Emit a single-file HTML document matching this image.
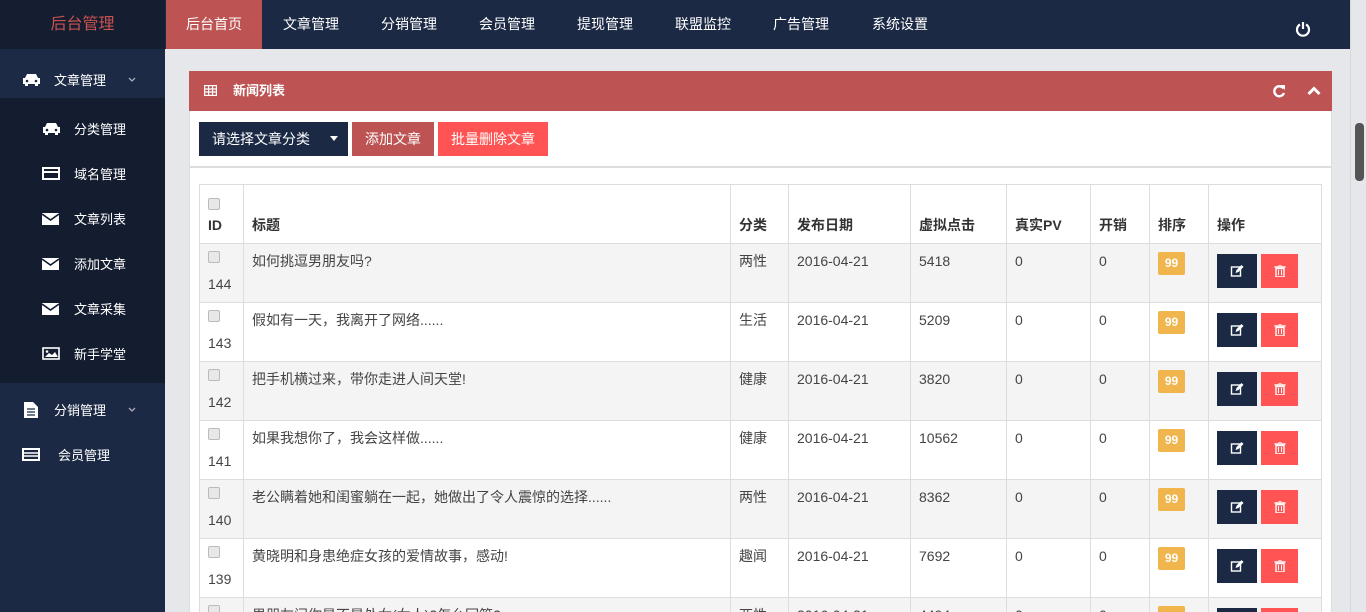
<!DOCTYPE html>
<html><head><meta charset="utf-8"><style>
*{margin:0;padding:0;box-sizing:border-box}
html,body{width:1366px;height:612px;overflow:hidden}
body{background:#e5e7ea;font-family:"Liberation Sans","Noto Sans CJK SC",sans-serif;font-size:14px;color:#333;position:relative}
#wrap{position:absolute;left:0;top:0;width:1366px;height:612px;overflow:hidden}
.abs{position:absolute}
.top{left:0;top:0;width:1350px;height:49px;background:#1b2945}
.logo{left:0;top:0;width:165px;height:49px;background:#151e31;color:#c9524f;font-size:16px;text-align:center;line-height:49px}
.nav{top:0;height:49px;line-height:49px;color:#fff;font-size:14px;text-align:center}
.side{left:0;top:49px;width:165px;height:563px;background:#1b2944}
.sub{left:0;top:98px;width:165px;height:285px;background:#141d30}
.si{color:#fff;font-size:13px;height:45px;line-height:45px}
.panel{left:189px;top:71px;width:1143px;height:541px;background:#fff;border:1px solid #ddd;border-bottom:0}
.ph{left:189px;top:71px;width:1143px;height:40px;background:#bd5352;color:#fff;font-weight:bold;font-size:13px;line-height:40px}
.btn{top:122px;height:34px;line-height:34px;color:#fff;font-size:14px;text-align:center}
#tw{position:absolute;left:199px;top:184px;width:1124px;height:428px;overflow:hidden}
table{border-collapse:collapse;font-size:14px}
td,th{border:1px solid #ddd;text-align:left;vertical-align:top;padding:7px 8px 0 8px;font-weight:normal;color:#444;line-height:20px}
th{font-weight:bold;vertical-align:bottom;padding-bottom:8px;height:59px;color:#333}
tr.r td{height:59px}
tr.g td{background:#f4f4f4}
.cb{display:inline-block;width:12px;height:12px;border:1px solid #bbb;border-radius:2px;background:#e8e8e8;margin-bottom:6px}
.b99{display:inline-block;background:#f0b54d;color:#fff;font-weight:bold;font-size:12px;width:27px;height:23px;line-height:23px;text-align:center;border-radius:2px;margin-top:1px}
.ed,.de{display:inline-block;width:40px;height:34px;vertical-align:top;margin-top:3px;position:relative}
.ed{background:#1b2945}.de{background:#ff5453;width:37px;margin-left:4px}
.ed svg,.de svg{position:absolute;left:50%;top:50%;transform:translate(-50%,-50%)}
.scr{left:1350px;top:0;width:16px;height:612px;background:#e5e7ea;border-left:1px solid #d5d7da}
</style></head><body><div id="wrap">
<div class="abs top"></div>
<div class="abs logo">后台管理</div>
<div class="abs nav" style="left:166px;width:96px;background:#bd5352">后台首页</div>
<div class="abs nav" style="left:262px;width:98px">文章管理</div>
<div class="abs nav" style="left:360px;width:98px">分销管理</div>
<div class="abs nav" style="left:458px;width:98px">会员管理</div>
<div class="abs nav" style="left:556px;width:98px">提现管理</div>
<div class="abs nav" style="left:654px;width:98px">联盟监控</div>
<div class="abs nav" style="left:752px;width:98px">广告管理</div>
<div class="abs nav" style="left:850px;width:100px">系统设置</div>
<svg class="abs" style="left:1295px;top:21px" width="16" height="16" viewBox="0 0 16 16"><path d="M5 3.5A6 6 0 1 0 11 3.5" fill="none" stroke="#fff" stroke-width="2.2"/><path d="M8 1v7" stroke="#fff" stroke-width="2.2"/></svg>
<div class="abs side"></div>
<div class="abs sub"></div>
<div class="abs" style="left:0;top:49px;width:165px;height:49px;background:#1c2a45"></div>
<div class="abs si" style="left:54px;top:58px">文章管理</div>
<svg class="abs" style="left:128px;top:77px" width="8" height="6"><path d="M1 1l3 3 3-3" fill="none" stroke="#aab" stroke-width="1.3"/></svg>
<svg class="abs" style="left:22px;top:73px" width="19" height="13"><path d="M3 5L5 1h9l2 4h2v6h-2v2h-3v-2H6v2H3v-2H1V5z" fill="#fff"/><circle cx="5" cy="8" r="1.3" fill="#1c2a45"/><circle cx="14" cy="8" r="1.3" fill="#1c2a45"/></svg>
<div class="abs si" style="left:74px;top:107px">分类管理</div>
<svg class="abs" style="left:42px;top:122px" width="19" height="13"><path d="M3 5L5 1h9l2 4h2v6h-2v2h-3v-2H6v2H3v-2H1V5z" fill="#fff"/><circle cx="5" cy="8" r="1.3" fill="#141d30"/><circle cx="14" cy="8" r="1.3" fill="#141d30"/></svg>
<div class="abs si" style="left:74px;top:152px">域名管理</div>
<svg class="abs" style="left:42px;top:167px" width="18" height="13"><rect x="1" y="1" width="16" height="11" fill="none" stroke="#fff" stroke-width="2"/><rect x="1" y="4" width="16" height="2" fill="#fff"/></svg>
<div class="abs si" style="left:74px;top:197px">文章列表</div>
<div class="abs si" style="left:74px;top:242px">添加文章</div>
<div class="abs si" style="left:74px;top:287px">文章采集</div>
<svg class="abs" style="left:42px;top:213px" width="17" height="12"><rect width="17" height="12" fill="#fff"/><path d="M0 1l8.5 6L17 1" stroke="#141d30" stroke-width="1.6" fill="none"/></svg>
<svg class="abs" style="left:42px;top:258px" width="17" height="12"><rect width="17" height="12" fill="#fff"/><path d="M0 1l8.5 6L17 1" stroke="#141d30" stroke-width="1.6" fill="none"/></svg>
<svg class="abs" style="left:42px;top:303px" width="17" height="12"><rect width="17" height="12" fill="#fff"/><path d="M0 1l8.5 6L17 1" stroke="#141d30" stroke-width="1.6" fill="none"/></svg>
<div class="abs si" style="left:74px;top:332px">新手学堂</div>
<svg class="abs" style="left:42px;top:347px" width="18" height="13"><rect x="1" y="1" width="16" height="11" fill="none" stroke="#fff" stroke-width="1.6"/><path d="M3 10l4-4 3 2 3-3 3 5z" fill="#fff"/><circle cx="5" cy="4.5" r="1.3" fill="#fff"/></svg>
<div class="abs si" style="left:54px;top:388px">分销管理</div>
<svg class="abs" style="left:128px;top:407px" width="8" height="6"><path d="M1 1l3 3 3-3" fill="none" stroke="#aab" stroke-width="1.3"/></svg>
<svg class="abs" style="left:24px;top:402px" width="14" height="16"><path d="M0 0h9l5 5v11H0z" fill="#fff"/><path d="M3 7h8M3 10h8M3 13h8" stroke="#1b2944" stroke-width="1.3"/></svg>
<div class="abs si" style="left:58px;top:433px">会员管理</div>
<svg class="abs" style="left:22px;top:448px" width="18" height="13"><rect x="1" y="1" width="16" height="11" fill="none" stroke="#fff" stroke-width="2"/><path d="M1 5h16M1 8h16" stroke="#fff" stroke-width="1.5"/></svg>

<div class="abs panel"></div>
<div class="abs ph"><span style="position:absolute;left:44px">新闻列表</span></div>
<svg class="abs" style="left:204px;top:85px" width="13" height="11"><g fill="none" stroke="#fff" stroke-width="1.2"><rect x=".6" y=".6" width="11.8" height="9.8"/><path d="M.6 4h11.8M.6 7h11.8M4.6.6v9.8M8.6.6v9.8"/></g></svg>
<svg class="abs" style="left:1272px;top:84px" width="14" height="14"><path d="M11.5 4.5A5 5 0 1 0 12 9" fill="none" stroke="#fff" stroke-width="2.4"/><path d="M8 1h5v5z" fill="#fff"/></svg>
<svg class="abs" style="left:1307px;top:86px" width="14" height="10"><path d="M1.5 8L7 2.5 12.5 8" fill="none" stroke="#fff" stroke-width="3"/></svg>
<div class="abs" style="left:189px;top:166px;width:1143px;height:2px;background:#ddd"></div>
<div class="abs btn" style="left:199px;width:149px;background:#1b2945;text-align:left;padding-left:13px">请选择文章分类<span style="position:absolute;left:131px;top:14px;border:4px solid transparent;border-top:5px solid #fff;border-bottom:0"></span></div>
<div class="abs btn" style="left:352px;width:82px;background:#bd5352">添加文章</div>
<div class="abs btn" style="left:438px;width:110px;background:#ff5453">批量删除文章</div>

<div id="tw"><table>
<colgroup><col style="width:44px"><col style="width:487px"><col style="width:58px"><col style="width:122px"><col style="width:96px"><col style="width:84px"><col style="width:59px"><col style="width:59px"><col style="width:113px"></colgroup>
<tr><th><span class="cb" style="margin-bottom:0"></span><br>ID</th><th>标题</th><th>分类</th><th>发布日期</th><th>虚拟点击</th><th>真实PV</th><th>开销</th><th>排序</th><th>操作</th></tr>
<tr class="r g"><td><span class="cb"></span><br>144</td><td>如何挑逗男朋友吗?</td><td>两性</td><td>2016-04-21</td><td>5418</td><td>0</td><td>0</td><td><span class="b99">99</span></td><td><span class="ed"></span><span class="de"></span></td></tr>
<tr class="r"><td><span class="cb"></span><br>143</td><td>假如有一天，我离开了网络......</td><td>生活</td><td>2016-04-21</td><td>5209</td><td>0</td><td>0</td><td><span class="b99">99</span></td><td><span class="ed"></span><span class="de"></span></td></tr>
<tr class="r g"><td><span class="cb"></span><br>142</td><td>把手机横过来，带你走进人间天堂!</td><td>健康</td><td>2016-04-21</td><td>3820</td><td>0</td><td>0</td><td><span class="b99">99</span></td><td><span class="ed"></span><span class="de"></span></td></tr>
<tr class="r"><td><span class="cb"></span><br>141</td><td>如果我想你了，我会这样做......</td><td>健康</td><td>2016-04-21</td><td>10562</td><td>0</td><td>0</td><td><span class="b99">99</span></td><td><span class="ed"></span><span class="de"></span></td></tr>
<tr class="r g"><td><span class="cb"></span><br>140</td><td>老公瞒着她和闺蜜躺在一起，她做出了令人震惊的选择......</td><td>两性</td><td>2016-04-21</td><td>8362</td><td>0</td><td>0</td><td><span class="b99">99</span></td><td><span class="ed"></span><span class="de"></span></td></tr>
<tr class="r"><td><span class="cb"></span><br>139</td><td>黄晓明和身患绝症女孩的爱情故事，感动!</td><td>趣闻</td><td>2016-04-21</td><td>7692</td><td>0</td><td>0</td><td><span class="b99">99</span></td><td><span class="ed"></span><span class="de"></span></td></tr>
<tr class="r g"><td><span class="cb"></span><br>138</td><td>男朋友问你是不是处女(女人)?怎么回答?</td><td>两性</td><td>2016-04-21</td><td>4494</td><td>0</td><td>0</td><td><span class="b99">99</span></td><td><span class="ed"></span><span class="de"></span></td></tr>
</table></div>
<div class="abs scr"><div class="abs" style="left:4px;top:123px;width:9px;height:58px;background:#555;border-radius:4px"></div></div>
</div>
<script>
document.querySelectorAll('.ed').forEach(function(e){e.innerHTML='<svg width="13" height="12"><rect x="1" y="2" width="9" height="9" fill="none" stroke="#fff" stroke-width="1.4"/><path d="M5 8l1-3 5-5 2 2-5 5z" fill="#fff"/></svg>'});
document.querySelectorAll('.de').forEach(function(e){e.innerHTML='<svg width="11" height="12"><path d="M0 2h11M4 0h3" stroke="#fff" stroke-width="1.5"/><path d="M1.5 3.5h8V12h-8z" fill="none" stroke="#fff" stroke-width="1.4"/><path d="M4 5v5M7 5v5" stroke="#fff"/></svg>'});
</script>
</body></html>
